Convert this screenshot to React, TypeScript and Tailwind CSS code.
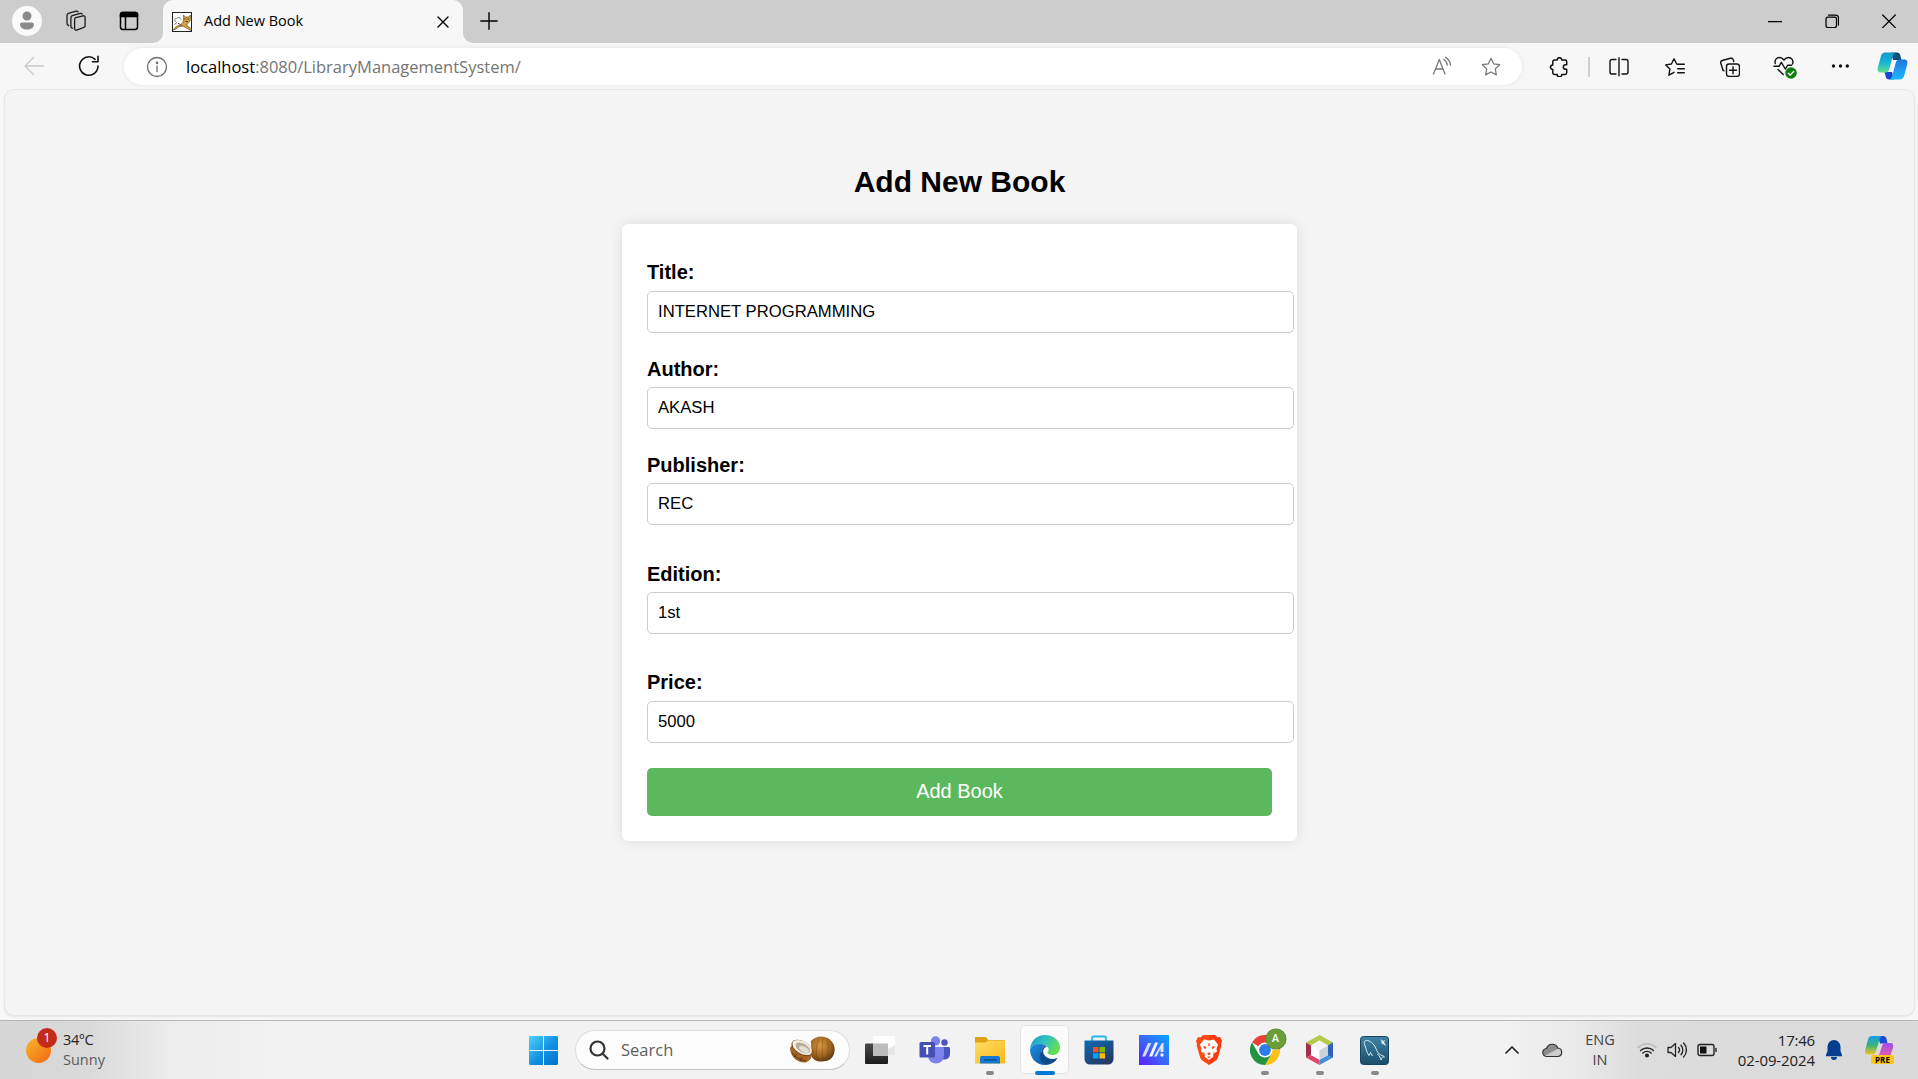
import React from "react";

type IconProps = { children: React.ReactNode; size?: number; box?: string; sw?: number; color?: string; className?: string };

function Icon({ children, size = 20, box, sw = 1.25, color = "#1b1b1b", className = "" }: IconProps) {
  return (
    <svg
      width={size}
      height={size}
      viewBox={box ?? `0 0 ${size} ${size}`}
      fill="none"
      stroke={color}
      strokeWidth={sw}
      strokeLinecap="round"
      strokeLinejoin="round"
      className={`shrink-0 ${className}`}
    >
      {children}
    </svg>
  );
}

function Favicon() {
  return (
    <svg width="20" height="20" viewBox="0 0 20 20" className="shrink-0">
      <rect x=".5" y=".5" width="19" height="19" fill="#fff" stroke="#222" />
      <path d="M4.500 6.500C2.500 6 2 9 4 9.500M5 6c2-1 4 0 4 1.500M2.500 12.500L5 10.500M15 14l3 3" stroke="#777" fill="none" />
      <path d="M1 18l3-3.500 4-1.500 3-2.500.5-3.500V3l2 2h3l2-2-.3 5.500-2.200 3-1.500 1.500 5 4-1 1.500-5-3-3.500-1.500-3.500 1-2.500 2z" fill="#d2a041" stroke="#5b4720" strokeWidth=".6" />
      <path d="M12.300 7h1.400M15.500 7h1.400M13.500 9.500h2.400" stroke="#3a2b12" strokeWidth=".9" />
      <path d="M6 11.500c1.500 0 3 1 3.500 3" stroke="#444" fill="none" />
    </svg>
  );
}

function TabStrip() {
  return (
    <div className="flex h-[43px] items-stretch bg-[#cdcdcd]">
      <div className="flex w-[163px] items-center pb-[1px]">
        <div className="ml-[12px] flex size-[30px] items-center justify-center rounded-full bg-[#fafafa]">
          <svg width="16" height="20" viewBox="0 0 16 20" fill="#8a8a8a">
            <circle cx="8" cy="5" r="4.500" />
            <path d="M3 11.500h10a2 2 0 0 1 2 2c0 3-3 5-7 5s-7-2-7-5a2 2 0 0 1 2-2z" />
          </svg>
        </div>
        <Icon size={22} className="ml-[23px]" sw={1.3}>
          <path d="M9.600 9.200a1.600 1.600 0 0 1 1.200-1.500l7.300-1.900a1.600 1.600 0 0 1 2 1.500v8.600a1.600 1.600 0 0 1-1.200 1.500l-7.300 2.800a1.600 1.600 0 0 1-2-1.500z" />
          <path d="M7.600 18.200c-1-.1-1.700-.8-1.700-1.800V7.500a2 2 0 0 1 1.400-1.900L15.300 3.400c.9-.2 1.600.1 1.900.8" />
          <path d="M3.700 15.500c-1-.2-1.700-.9-1.700-1.900V5.200a2 2 0 0 1 1.400-1.900L11 1.200c1-.3 1.700 0 2 .7" />
        </Icon>
        <Icon size={20} className="ml-[32px]" sw={1.500} color="#000">
          <rect x="1.500" y="1.500" width="17" height="17" rx="2.500" />
          <path d="M1.500 5.500V3.500a2 2 0 0 1 2-2h13a2 2 0 0 1 2 2v2z" fill="#000" />
          <path d="M6.500 6v12" />
        </Icon>
      </div>
      <div className="relative flex w-[300px] items-center rounded-t-[10px] bg-[#f7f7f7]">
        <svg width="10" height="10" className="absolute bottom-0 -left-[10px]"><path d="M10 0v10H0A10 10 0 0 0 10 0z" fill="#f7f7f7" /></svg>
        <svg width="10" height="10" className="absolute -right-[10px] bottom-0"><path d="M0 0v10h10A10 10 0 0 1 0 0z" fill="#f7f7f7" /></svg>
        <div className="ml-[9px] flex items-center gap-[12px]">
          <Favicon />
          <span className="pb-[2px] font-['Open_Sans',sans-serif] text-[14.500px] leading-5 whitespace-nowrap text-black">Add New Book</span>
        </div>
        <Icon size={12} className="mr-[14px] ml-auto" color="#000" sw={1.400}><path d="M1 1l10 10M11 1L1 11" /></Icon>
      </div>
      <div className="flex flex-1 items-center pb-[1px]">
        <Icon size={18} className="ml-[17px]" color="#000" sw={1.400}><path d="M9 .8v16.400M.8 9h16.400" /></Icon>
        <div className="mr-[1px] ml-auto flex">
          <div className="flex w-[57px] justify-center"><Icon size={14} color="#000"><path d="M.5 7.500h13" /></Icon></div>
          <div className="flex w-[57px] justify-center">
            <Icon size={14} color="#000"><rect x="1" y="3" width="10.500" height="10.500" rx="2" /><path d="M3.500 1h7a3 3 0 0 1 3 3v7" /></Icon>
          </div>
          <div className="flex w-[57px] justify-center"><Icon size={14} color="#000"><path d="M.7 1l12.600 12.600M13.300 1L.7 13.600" /></Icon></div>
        </div>
      </div>
    </div>
  );
}

const star = "M10 1.400l2.650 5.450 6 .85-4.350 4.200 1.050 5.950L10 15l-5.350 2.850 1.050-5.950L1.350 7.700l6-.85z";

function Toolbar() {
  return (
    <div className="flex h-[46px] items-start bg-[#f7f7f7] pt-[5px]">
      <div className="flex h-[37px] w-[124px] shrink-0 items-center pb-[1px]">
        <Icon size={20} className="ml-[24px]" color="#c9c9c9" sw={1.300}><path d="M19.500 10H1M9.500 1.500L1 10l8.500 8.500" /></Icon>
        <Icon size={22} className="ml-[34px]" color="#111" sw={1.600}>
          <path d="M20 11a9.200 9.200 0 1 1-2.900-6.700M20 1.200v5.600h-5.600" />
        </Icon>
      </div>
      <div className="flex h-[37px] w-[1398px] shrink-0 items-center rounded-full bg-white shadow-[0_0_5px_rgba(0,0,0,0.08)]">
        <Icon size={22} className="ml-[21.500px]" color="#6e6e6e" sw={1.300}>
          <circle cx="11" cy="11" r="9.500" />
          <path d="M11 10v5.500" />
          <circle cx="11" cy="6.800" r=".7" fill="#6e6e6e" />
        </Icon>
        <span className="ml-[18.500px] font-['Open_Sans',sans-serif] text-[16.500px] leading-6 whitespace-nowrap text-[#747474]">
          <span className="text-black">localhost</span>:8080/LibraryManagementSystem/
        </span>
        <Icon size={22} className="ml-auto" color="#777" sw={1.300}>
          <path d="M2.500 18L8.300 3.500 14 18M4.500 13h7.600M13 3.500a7 7 0 0 1 3.200 5.500M14.500 1.200a10.500 10.500 0 0 1 5 8" />
        </Icon>
        <Icon size={20} className="mr-[21px] ml-[28px]" color="#777"><path d={star} /></Icon>
      </div>
      <div className="flex h-[37px] flex-1 items-center">
        <div className="ml-[8px] flex w-[57px] justify-center">
          <Icon size={20} color="#111" sw={1.500}>
            <path d="M5.500 3h2.700a2.300 2.300 0 0 1 4.600 0H16a1.700 1.700 0 0 1 1.700 1.700v3.100h-1.200a2.200 2.200 0 0 0 0 4.400h1.200v3.600a1.700 1.700 0 0 1-1.700 1.700h-3.200a2.300 2.300 0 0 1-4.600 0H5.500a1.700 1.700 0 0 1-1.700-1.700v-3.300a2.300 2.300 0 0 1 0-4.600V4.700A1.700 1.700 0 0 1 5.500 3z" />
          </Icon>
        </div>
        <div className="ml-[1px] h-[20px] w-[2px] bg-[#cfcfcf]" />
        <div className="flex w-[57px] justify-center">
          <Icon size={20} color="#111" sw={1.400}>
            <path d="M7 2.500H3A2 2 0 0 0 1 4.500v10.500a2 2 0 0 0 2 2h4M13 2.500h4a2 2 0 0 1 2 2v10.500a2 2 0 0 1-2 2h-4M10 .8v18" />
          </Icon>
        </div>
        <div className="flex w-[55px] justify-center">
          <Icon size={20} color="#111" sw={1.400}>
            <path d="M13 7.200l-1.300-.2-2.700-5.200-2.600 5.200-5.700.9 4.200 4-1 6.300L9 15.300M12.700 11.700h6.600M12.700 15.800h6.600M13 7.200h6.300" />
          </Icon>
        </div>
        <div className="flex w-[55px] justify-center">
          <Icon size={20} color="#111" sw={1.400}>
            <rect x="6.500" y="7" width="13" height="12.400" rx="2.500" />
            <path d="M13 9.700v7M9.500 13.200h7M13.800 4.500l-.5-1.600a2.300 2.300 0 0 0-2.800-1.600L2.300 3.500A2.300 2.300 0 0 0 .8 6.300l2 6.200a2 2 0 0 0 1.200 1.400" />
          </Icon>
        </div>
        <div className="flex w-[56px] justify-center">
          <Icon size={24} color="#111" sw={1.400}>
            <path d="M2.300 8.500C1.300 5 3.700 2.500 6.500 2.500c2 0 3.300 1 4.500 2.500 1.200-1.500 2.500-2.500 4.500-2.500 3 0 5.400 3 4 6.500M1 11.300h5l2.300-4 4 6.700 2.300-3.700h4M5 14.500l5.300 5" />
            <circle cx="18" cy="18" r="5.800" fill="#107c10" stroke="none" />
            <path d="M15.300 18.200l1.900 1.900 3.500-3.700" stroke="#fff" />
          </Icon>
        </div>
        <div className="flex w-[53px] justify-center pb-[1px]">
          <Icon size={18} color="none"><g fill="#111"><circle cx="2.500" cy="9" r="1.700" /><circle cx="9.500" cy="9" r="1.700" /><circle cx="16.300" cy="9" r="1.700" /></g></Icon>
        </div>
        <CopilotIcon />
      </div>
    </div>
  );
}

function CopilotIcon() {
  return (
    <svg width="31" height="28" viewBox="0 0 31 28" className="mb-[1px] ml-[11px] shrink-0">
      <defs>
        <linearGradient id="cpa" x1="0" y1="0" x2="0" y2="1"><stop offset="0" stopColor="#0f9bd0" /><stop offset=".5" stopColor="#17b3d3" /><stop offset="1" stopColor="#5fe08a" /></linearGradient>
        <linearGradient id="cpb" x1="0" y1="0" x2="0" y2="1"><stop offset="0" stopColor="#2374dd" /><stop offset="1" stopColor="#19b9ff" /></linearGradient>
      </defs>
      <path d="M14 .5h6c2 0 2.600 1 3.200 2.800L24.500 8H16z" fill="#0a4f7d" />
      <path d="M17 27.500h-5c-2 0-2.700-1-3.200-2.800L7.500 20H15z" fill="#1447d6" />
      <path d="M8 .5h10.500c-2 1-2.600 3-3.200 5.200L12.500 16.500c-.7 2.500-1.900 4-4.200 4H4C1 20.500 0 18.500.9 15.200l3-11.200C4.600 1.700 6 .5 8 .5z" fill="url(#cpa)" />
      <path d="M23 27.500H12.500c2-1 2.600-3 3.200-5.200L18.500 11.500c.7-2.500 1.900-4 4.200-4H27c3 0 4 2 3.100 5.300l-3 11.200C26.400 26.300 25 27.500 23 27.500z" fill="url(#cpb)" />
    </svg>
  );
}

function Field({ label, value, className, labelClass = "h-[30px]" }: { label: string; value: string; className: string; labelClass?: string }) {
  return (
    <div className={className}>
      <label className={`mb-[4px] block text-[20px] leading-[30px] font-bold ${labelClass}`}>{label}</label>
      <input
        defaultValue={value}
        className="block h-[42px] w-[647px] rounded-[5px] border border-[#ccc] bg-white px-[10px] text-[16.670px] outline-none"
      />
    </div>
  );
}

function Page() {
  return (
    <div className="mr-[3px] ml-[4px] h-[927px] shrink-0 rounded-[10px] border border-[#e6e6e6] bg-[#f4f4f4] font-['Liberation_Sans',Arial,sans-serif] text-black shadow-[0_1px_2px_rgba(0,0,0,0.08)]">
      <div className="mx-auto w-[675px]">
        <h1 className="pt-[74px] text-center text-[30px] leading-[36px] font-bold">Add New Book</h1>
        <form className="mt-[24px] h-[617px] rounded-[6px] bg-white px-[25px] pt-[33px] shadow-[0_0_13px_rgba(0,0,0,0.1)]" onSubmit={(e) => e.preventDefault()}>
          <Field label="Title:" value="INTERNET PROGRAMMING" className="mb-[20px]" />
          <Field label="Author:" value="AKASH" className="mb-[20px]" labelClass="h-[30px] pt-[1px]" />
          <Field label="Publisher:" value="REC" className="mb-[33px]" labelClass="h-[30px] pt-[1px]" />
          <Field label="Edition:" value="1st" className="mb-[33px]" labelClass="h-[30px] pt-[1px]" />
          <Field label="Price:" value="5000" className="mb-[25px]" />
          <button className="block h-[48px] w-[625px] rounded-[5px] bg-[#5cb85c] pb-[2px] text-[20px] text-white">Add Book</button>
        </form>
      </div>
    </div>
  );
}

function Slot({ children, mark, active }: { children: React.ReactNode; mark?: boolean; active?: boolean }) {
  return (
    <div className="relative flex h-[58px] w-[55px] items-center justify-center">
      {active && <div className="absolute top-[4px] left-[3px] h-[49px] w-[49px] rounded-[5px] border border-[#e4e4e4] bg-[#fbfbfb]" />}
      <div className="relative flex">{children}</div>
      {mark && <div className="absolute bottom-[4px] left-[23.500px] h-[4px] w-[8px] rounded-full bg-[#8a8a8a]" />}
      {active && <div className="absolute bottom-[4px] left-[17.500px] h-[4px] w-[20px] rounded-full bg-[#0078d4]" />}
    </div>
  );
}

function Coconut() {
  return (
    <svg width="47" height="28" viewBox="0 0 47 28" className="mr-[13px] ml-auto shrink-0">
      <defs>
        <radialGradient id="coc" cx=".4" cy=".35" r=".7"><stop offset="0" stopColor="#d9983f" /><stop offset=".6" stopColor="#a0651f" /><stop offset="1" stopColor="#5a340f" /></radialGradient>
      </defs>
      <path d="M22 5c4-4 9-5.500 15-3.500 6 2 9.500 8 8.500 14-1 7-6 10-13 10-5 0-8-2-10-5z" fill="url(#coc)" />
      <path d="M30 3c-3 6-4 14-1 22M34 2c-1 7-1 15 0 22M38 4c2 6 2 12-1 20" stroke="#6b3e12" strokeWidth=".8" fill="none" opacity=".5" />
      <path d="M1 12c0 8 7 15 15 14.500 4-.5 6.500-4 7-8L6 5z" fill="#a3651f" />
      <path d="M3 17c3 4 8 7 14 8M5 21l3-3M11 25l2-4" stroke="#5a340f" strokeWidth="1" fill="none" />
      <ellipse cx="13" cy="12" rx="11.500" ry="6.700" transform="rotate(30 13 12)" fill="#7b4a1d" />
      <ellipse cx="13.200" cy="11.500" rx="10.800" ry="6.200" transform="rotate(30 13.200 11.500)" fill="#f6efe6" />
      <ellipse cx="13.800" cy="12" rx="8" ry="4.200" transform="rotate(30 13.800 12)" fill="#b9aa9a" />
      <ellipse cx="15" cy="13.300" rx="5.500" ry="2.700" transform="rotate(30 15 13.300)" fill="#e5ddd4" />
    </svg>
  );
}

function TaskIcons() {
  return (
    <>
      <Slot>
        <svg width="30" height="30" viewBox="0 0 30 30">
          <defs><linearGradient id="tva" x1="0" y1="0" x2="0" y2="1"><stop offset="0" stopColor="#4a4a4a" /><stop offset="1" stopColor="#1c1c1c" /></linearGradient></defs>
          <rect x="0" y="8.500" width="23" height="20.500" rx="1" fill="url(#tva)" />
          <rect x="8" y="1" width="22" height="20" rx="1" fill="#fdfdfd" fillOpacity=".95" />
          <rect x="8" y="8.500" width="15" height="12.500" fill="#bcbcbc" />
          <path d="M23 20.500h7V10l-7 4z" fill="#e6e6e6" />
        </svg>
      </Slot>
      <Slot>
        <svg width="31" height="28" viewBox="0 0 31 28" className="mr-[1px]">
          <circle cx="25.500" cy="6.500" r="3.200" fill="#4b53bc" />
          <path d="M21 11h8.500c.8 0 1.500.6 1.500 1.500V18a5.500 5.500 0 0 1-8 4.900z" fill="#4b53bc" />
          <circle cx="16.500" cy="5" r="4.700" fill="#7b83eb" />
          <path d="M9 11h14.500c.8 0 1.500.7 1.500 1.500v7a8 8 0 0 1-16 0z" fill="#7b83eb" />
          <rect x=".5" y="6" width="15.500" height="15.500" rx="1.500" fill="#464eb8" />
          <path d="M4.500 10h7.500M8.200 10v8.500" stroke="#fff" strokeWidth="2" />
        </svg>
      </Slot>
      <Slot mark>
        <svg width="30" height="28" viewBox="0 0 30 28">
          <defs><linearGradient id="fld" x1="0" y1="0" x2="1" y2="1"><stop offset="0" stopColor="#ffdd68" /><stop offset="1" stopColor="#fbb917" /></linearGradient></defs>
          <path d="M0 1.500C0 .8.600 1 1.500 1h8.300c1 0 1.500.300 2 1l1.400 2H28.500c1 0 1.500.500 1.500 1.500V10H0z" fill="#e0a210" />
          <path d="M0 6.500h11l2-2h15.500c1 0 1.500.5 1.500 1.300V27.500H0z" fill="url(#fld)" />
          <path d="M5 27.500V22a2 2 0 0 1 2-2h16a2 2 0 0 1 2 2v5.500z" fill="#1479d0" />
          <path d="M9 24h12.500" stroke="#084c8f" strokeWidth="1.400" />
        </svg>
      </Slot>
      <Slot active>
        <svg width="30" height="30" viewBox="0 0 30 30">
          <defs>
            <linearGradient id="ega" x1="0" y1="0" x2="1" y2=".5"><stop offset="0" stopColor="#1791d2" /><stop offset=".5" stopColor="#2fc1c1" /><stop offset="1" stopColor="#62e04f" /></linearGradient>
            <linearGradient id="egb" x1="0" y1="0" x2="1" y2="1"><stop offset="0" stopColor="#1b8bdc" /><stop offset="1" stopColor="#0f4f9d" /></linearGradient>
          </defs>
          <path d="M0 14C1 5.500 7 0 15 0c9 0 15 6 15 12.500 0 5-3.500 7.500-7.500 7.500-3 0-5-1-5-2.200 0-.9 1.200-1.300 1.200-3.300 0-3-3-5.500-7.200-5.500C6.500 9 2 11 0 14z" fill="url(#ega)" />
          <path d="M0 14c2-3.500 6.500-5.500 11.500-5 2.500.2 5 1.400 6.300 3C15 11 11.500 13 11.500 17c0 5 4.500 8.500 9.500 8.500 2.500 0 4.500-.5 6-1.500-3 4-7.500 6-12 6C6 30 0 23 0 14z" fill="url(#egb)" />
          <path d="M11.500 17c0-3.500 2.500-5.400 5-5.300-5.500 2-4.500 10.300 4.500 12.300 2.500.3 4.500-.5 6.500-1.300-2 4-7 6.800-12 6.300C9.500 28 8 20 11.500 17z" fill="#114a8b" />
        </svg>
      </Slot>
      <Slot>
        <svg width="30" height="30" viewBox="0 0 30 30" className="mr-[2px]">
          <defs><linearGradient id="sto" x1="0" y1="0" x2=".6" y2="1"><stop offset="0" stopColor="#0d6cb8" /><stop offset="1" stopColor="#243a67" /></linearGradient></defs>
          <path d="M8 6.500V3A1.500 1.500 0 0 1 9.500 1.500h11A1.500 1.500 0 0 1 22 3v3.500" stroke="#28b4ea" strokeWidth="1.800" fill="none" />
          <path d="M.5 5.500h29V24a5.500 5.500 0 0 1-5.500 5.500H6A5.500 5.500 0 0 1 .5 24z" fill="url(#sto)" />
          <rect x="9" y="12" width="5.500" height="5.300" fill="#f25022" /><rect x="15.500" y="12" width="5.500" height="5.300" fill="#7fba00" />
          <rect x="9" y="18.200" width="5.500" height="5.300" fill="#00a4ef" /><rect x="15.500" y="18.200" width="5.500" height="5.300" fill="#ffb900" />
        </svg>
      </Slot>
      <Slot>
        <svg width="30" height="30" viewBox="0 0 30 30" className="mr-[1px]">
          <defs><linearGradient id="mas" x1="0" y1="1" x2="1" y2="0"><stop offset="0" stopColor="#5a1cff" /><stop offset=".5" stopColor="#3b67fb" /><stop offset="1" stopColor="#06a5ff" /></linearGradient></defs>
          <rect width="30" height="30" fill="url(#mas)" />
          <path d="M3 21.500L9 8h3.300L6.300 21.500z" fill="#cfdcff" />
          <path d="M10 21.500L16 7.500h3l-5.800 14z" fill="#f2f5ff" />
          <path d="M15 21.500L23 8h1.500V17h-3v-3.500l-4 8z" fill="#dfe8ff" />
          <circle cx="23" cy="20" r="1.700" fill="#f2f5ff" />
        </svg>
      </Slot>
      <Slot>
        <svg width="26" height="30" viewBox="0 0 26 30" className="mr-[1px]">
          <path d="M7 0h12l2.500 2.500L24 2l2 4-1 3 .3 1.500L22 22c-.6 2-1.500 3-3 4l-6 4-6-4c-1.500-1-2.400-2-3-4L.7 10.500 1 9 0 6l2-4 2.500.5z" fill="#fb4b14" />
          <path d="M13 0h6l2.500 2.500L24 2l2 4-1 3 .3 1.500L22 22c-.6 2-1.500 3-3 4l-6 4z" fill="#ff2d06" opacity=".6" />
          <path d="M13 5.500L18 4.500l4 5-1.500 4.500.5 2.500-4 3 .5 2-4.500 3.500-4.500-3.500.5-2-4-3 .5-2.500L4 9.500l4-5z" fill="#fff" />
          <path d="M7 11l3.500.7-.7 2.300-1.800-.7zM19 11l-3.500.7.7 2.300 1.800-.7zM13 17l-2 2 2 1.300 2-1.300zM12.500 8h1l.3 3h-1.600zM6.500 17l2.500 1-1 1zM19.500 17l-2.500 1 1 1zM11 22l2-.7 2 .7-2 1z" fill="#fb4b14" />
        </svg>
      </Slot>
      <Slot mark>
        <svg width="30" height="30" viewBox="0 0 30 30">
          <path d="M15 15L2 7.500A15 15 0 0 1 28 7.500z" fill="#ea4335" />
          <path d="M15 15h13V7.500A15 15 0 0 1 15 30l6.500-11.200z" fill="#fbc116" />
          <path d="M2 7.500A15 15 0 0 0 15 30l6.500-11.200L15 15 8.500 18.700z" fill="#229342" />
          <circle cx="15" cy="15" r="7.500" fill="#fff" /><circle cx="15" cy="15" r="5.900" fill="#2b7de9" />
        </svg>
        <span className="absolute -top-[6px] left-[16px] flex size-[20px] items-center justify-center rounded-full bg-[#689f38] font-['Roboto',sans-serif] text-[11px] font-medium text-white shadow-[0_0_0_0.5px_#557f30]">A</span>
      </Slot>
      <Slot mark>
        <svg width="27" height="30" viewBox="0 0 27 30">
          <path d="M13.500 0L27 7.500l-5 3-8.500-5-8.500 5-5-3z" fill="#b3cb4b" />
          <path d="M0 7.500l5 3v9.700L0 22.500z" fill="#a32f4f" /><path d="M0 22.500l5-2.500 8.500 4.700V30z" fill="#e0466a" />
          <path d="M27 7.500l-5 3v9.700l-8.500 4.500V30L27 22.500z" fill="#4190d9" /><path d="M27 7.500l-5 3v9.700l5 2.300z" fill="#2f62b5" />
          <path d="M13.500 5.500l8.500 5-8.500 5-8.500-5z" fill="#f1f5f6" /><path d="M5 10.500l8.500 5v9.200L5 20z" fill="#fff" /><path d="M22 10.500l-8.500 5v9.200L22 20z" fill="#c8d3da" />
        </svg>
      </Slot>
      <Slot mark>
        <svg width="29" height="29" viewBox="0 0 29 29">
          <defs><linearGradient id="sql" x1="0" y1="0" x2="0" y2="1"><stop offset="0" stopColor="#3f84a6" /><stop offset="1" stopColor="#1c4d6b" /></linearGradient></defs>
          <rect x=".5" y=".5" width="28" height="28" rx="3" fill="url(#sql)" stroke="#174560" />
          <path d="M9 19.500C7 17 6.500 14 5.500 11 4.500 8 3.500 6.500 5 5s6 0 9 4c2 2.700 2.600 6 4.500 8.500 2 2 5 2 6 3.500-2-.4-3 .4-3.400 3-.7-2-1.500-4-3.600-6M9 19.500l1.500-3 2 3.500" stroke="#dcebf2" strokeWidth="1" fill="none" />
          <path d="M20 3l2 3-1 1 2 1 3 2-2-4 1-2-2 1z" fill="#eef5f8" />
        </svg>
      </Slot>
    </>
  );
}

function Taskbar() {
  return (
    <div className="flex h-[59px] shrink-0 items-center border-t border-[#b4b6b6] bg-[linear-gradient(90deg,#d5d5d5_0px,#dadada_90px,#ececec_170px,#f2f2f2_280px,#f2f2f2_1500px,#e9e9e9_1580px,#dcdcdc_1640px,#dadada_1918px)] font-['Open_Sans',sans-serif]">
      <div className="flex w-[529px] items-center">
        <div className="relative ml-[26px] size-[25px] rounded-full bg-linear-to-br from-[#f5b52c] to-[#f2640c]">
          <span className="absolute -top-[10px] left-[11px] flex size-[20px] items-center justify-center rounded-full bg-[#c42b1c] text-[13px] text-white">1</span>
        </div>
        <div className="ml-[12px] text-[14.500px] leading-[20px]">
          <div className="tracking-[-0.400px] text-[#222]">34°C</div>
          <div className="text-[#5c5c5c]">Sunny</div>
        </div>
      </div>
      <svg width="29" height="29" viewBox="0 0 29 29" className="shrink-0">
        <defs><linearGradient id="win" x1="0" y1="0" x2="1" y2="1"><stop offset="0" stopColor="#4fd0fb" /><stop offset=".55" stopColor="#1290e0" /><stop offset="1" stopColor="#0470cf" /></linearGradient></defs>
        <path d="M1 0h13v14H0V1zM15 0h13l1 1v13H15zM0 15h14v14H1l-1-1zM15 15h14v13l-1 1H15z" fill="url(#win)" />
      </svg>
      <div className="ml-[17px] flex h-[40px] w-[275px] items-center rounded-full border border-[#dedede] border-b-[#c4c4c4] bg-[#fcfcfc]">
        <Icon size={20} className="ml-[13px]" color="#333" sw={2.200}><circle cx="8.500" cy="8.500" r="7" /><path d="M13.700 13.700l4.800 4.800" /></Icon>
        <span className="ml-[12px] pt-[1px] text-[16.500px] text-[#5f5f5f]">Search</span>
        <Coconut />
      </div>
      <div className="ml-[2px] flex"><TaskIcons /></div>
      <div className="ml-auto flex items-center text-[15px] leading-[20px] text-[#222]">
        <Icon size={14} sw={1.700} color="#222"><path d="M1 10l6-6 6 6" /></Icon>
        <svg width="21" height="16" viewBox="0 0 21 16" className="mb-[1px] ml-[23px]">
          <path d="M5 14.500a4 4 0 0 1-.5-8A6 6 0 0 1 15.800 6a4.300 4.300 0 0 1 .4 8.500z" fill="#ccc" />
          <path d="M4.500 13c3-2 7-4 12.500-6.500-1.500-1-1.500-1-1.500-1A6 6 0 0 0 4.500 6.500C1 7 0 11 2.500 13z" fill="#8d8d8d" />
          <path d="M5 14.500a4 4 0 0 1-.5-8A6 6 0 0 1 15.800 6a4.300 4.300 0 0 1 .4 8.500z" fill="none" stroke="#333" strokeWidth="1.200" />
        </svg>
        <div className="ml-[20px] w-[34px] text-center text-[14.500px] text-[#444]"><div>ENG</div><div>IN</div></div>
        <Icon size={20} className="ml-[20px]" color="#222" sw={1.400}>
          <path d="M1 7.500a13 13 0 0 1 18 0" stroke="#b5b5b5" />
          <path d="M3.500 10.500a9.500 9.500 0 0 1 13 0M5.800 13a6.200 6.200 0 0 1 8.400 0" />
          <circle cx="10" cy="15.500" r="1.300" fill="#222" />
        </Icon>
        <Icon size={20} className="ml-[10px]" color="#222" sw={1.300}>
          <path d="M1 7.500h3l4.500-4v13l-4.500-4H1zM11.500 7.500a3.800 3.800 0 0 1 0 5M14 5.300a7 7 0 0 1 0 9.400M16.600 3a10.200 10.200 0 0 1 0 14" />
        </Icon>
        <Icon size={20} className="ml-[10px]" color="#222" sw={1.400}>
          <rect x="1" y="4.500" width="16" height="11" rx="2" /><rect x="3" y="6.500" width="6.500" height="7" fill="#111" stroke="none" /><path d="M19 8.500v3" />
        </Icon>
        <div className="ml-[10px] flex w-[88px] flex-col items-end whitespace-nowrap"><div className="tracking-[-0.200px]">17:46</div><div className="tracking-[-0.100px]">02-09-2024</div></div>
        <svg width="18" height="20" viewBox="0 0 18 20" className="ml-[10px]" fill="#053e8f">
          <path d="M9 0a6.500 6.500 0 0 0-6.500 6.500v4.500L1 15v1.200h16V15l-1.500-4V6.500A6.500 6.500 0 0 0 9 0zM6 17h6a3 3 0 0 1-6 0z" />
        </svg>
        <div className="relative mr-[24px] ml-[22px]">
          <svg width="29" height="28" viewBox="0 0 29 28">
            <defs>
              <linearGradient id="pra" x1="0" y1="0" x2="0" y2="1"><stop offset="0" stopColor="#1b9be8" /><stop offset=".5" stopColor="#38b37c" /><stop offset="1" stopColor="#f7c51e" /></linearGradient>
              <linearGradient id="prb" x1="0" y1="0" x2="0" y2="1"><stop offset="0" stopColor="#a04cf0" /><stop offset="1" stopColor="#f5628d" /></linearGradient>
            </defs>
            <path d="M13 0h5c2 0 3 1 3.500 3l1 4.500H15z" fill="#1b49cf" />
            <path d="M7 0h10c-2 1-2.500 3-3 5L11 15c-.6 2-1.500 3.500-3.500 3.500H3c-3 0-3.500-2-2.700-5L3 3.500C3.500 1 5 0 7 0z" fill="url(#pra)" />
            <path d="M20 24h-9c2-1 2.500-3 3-5l3-8.500c.6-2 1.500-3.500 3.500-3.500H25c3 0 3.800 2 3 5l-3 8.500c-.6 2.500-3 3.500-5 3.500z" fill="url(#prb)" />
          </svg>
          <span className="absolute top-[19px] left-[6px] flex h-[9px] w-[23px] items-center justify-center rounded-[2px] bg-[#fcc419] text-[8px] leading-none font-bold text-black">PRE</span>
        </div>
      </div>
    </div>
  );
}

export default function App() {
  return (
    <div className="flex h-[1079px] w-[1918px] flex-col overflow-hidden bg-[#f7f7f7]">
      <TabStrip />
      <Toolbar />
      <Page />
      <div className="h-[4px] shrink-0" />
      <Taskbar />
    </div>
  );
}
